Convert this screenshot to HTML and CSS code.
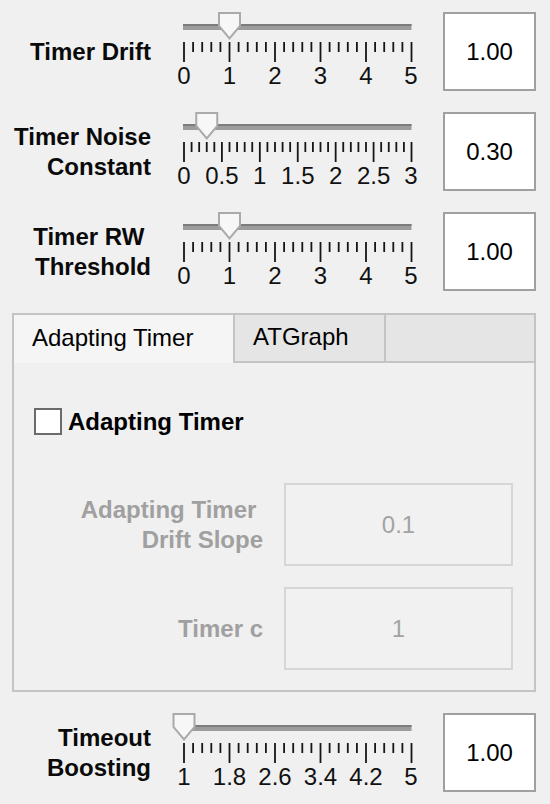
FILE: index.html
```html
<!DOCTYPE html>
<html>
<head>
<meta charset="utf-8">
<link rel="stylesheet" href="styles.css">
</head>
<body>
<div class="app">
  <div class="row">
    <div class="label">Timer Drift</div>
    <svg class="slider" width="250" height="79" viewBox="0 0 250 79">
      <rect class="track" x="11" y="12" width="228.5" height="6"/>
      <rect class="track-top" x="11" y="12" width="228.5" height="2"/>
      <line class="tick" x1="11.1" y1="35" x2="241" y2="35" stroke-width="10" stroke-dasharray="1.8 7.3"/>
      <line class="tick" x1="11.1" y1="45" x2="241" y2="45" stroke-width="10" stroke-dasharray="1.8 43.7"/>
      <polygon class="thumb" points="47,1 68,1 68,14 57.5,26.5 47,14"/>
      <text class="tl" x="12" y="72">0</text>
      <text class="tl" x="57.5" y="72">1</text>
      <text class="tl" x="103" y="72">2</text>
      <text class="tl" x="148.5" y="72">3</text>
      <text class="tl" x="194" y="72">4</text>
      <text class="tl" x="239" y="72">5</text>
    </svg>
    <div class="value">1.00</div>
  </div>

  <div class="row">
    <div class="label">Timer Noise<br>Constant</div>
    <svg class="slider" width="250" height="79" viewBox="0 0 250 79">
      <rect class="track" x="11" y="12" width="228.5" height="6"/>
      <rect class="track-top" x="11" y="12" width="228.5" height="2"/>
      <line class="tick" x1="11.1" y1="35" x2="241" y2="35" stroke-width="10" stroke-dasharray="1.8 5.7833"/>
      <line class="tick" x1="11.1" y1="45" x2="241" y2="45" stroke-width="10" stroke-dasharray="1.8 36.1167"/>
      <polygon class="thumb" points="24.25,1 45.25,1 45.25,14 34.75,26.5 24.25,14"/>
      <text class="tl" x="12" y="72">0</text>
      <text class="tl" x="49.9" y="72">0.5</text>
      <text class="tl" x="87.8" y="72">1</text>
      <text class="tl" x="125.8" y="72">1.5</text>
      <text class="tl" x="163.7" y="72">2</text>
      <text class="tl" x="201.6" y="72">2.5</text>
      <text class="tl" x="239" y="72">3</text>
    </svg>
    <div class="value">0.30</div>
  </div>

  <div class="row">
    <div class="label">Timer RW&nbsp;<br>Threshold</div>
    <svg class="slider" width="250" height="79" viewBox="0 0 250 79">
      <rect class="track" x="11" y="12" width="228.5" height="6"/>
      <rect class="track-top" x="11" y="12" width="228.5" height="2"/>
      <line class="tick" x1="11.1" y1="35" x2="241" y2="35" stroke-width="10" stroke-dasharray="1.8 7.3"/>
      <line class="tick" x1="11.1" y1="45" x2="241" y2="45" stroke-width="10" stroke-dasharray="1.8 43.7"/>
      <polygon class="thumb" points="47,1 68,1 68,14 57.5,26.5 47,14"/>
      <text class="tl" x="12" y="72">0</text>
      <text class="tl" x="57.5" y="72">1</text>
      <text class="tl" x="103" y="72">2</text>
      <text class="tl" x="148.5" y="72">3</text>
      <text class="tl" x="194" y="72">4</text>
      <text class="tl" x="239" y="72">5</text>
    </svg>
    <div class="value">1.00</div>
  </div>

  <div class="panel">
    <div class="tabs">
      <div class="tab active">Adapting Timer</div>
      <div class="tab">ATGraph</div>
      <div class="tab-fill"></div>
    </div>
    <div class="tab-body">
      <div class="check">
        <span class="check-box"></span>
        <span class="check-text">Adapting Timer</span>
      </div>
      <div class="fields">
        <div class="flabel">Adapting Timer&nbsp;<br>Drift Slope</div>
        <div class="field">0.1</div>
        <div class="flabel">Timer c</div>
        <div class="field">1</div>
      </div>
    </div>
  </div>

  <div class="row row-last">
    <div class="label">Timeout<br>Boosting</div>
    <svg class="slider" width="250" height="79" viewBox="0 0 250 79">
      <rect class="track" x="11" y="12" width="228.5" height="6"/>
      <rect class="track-top" x="11" y="12" width="228.5" height="2"/>
      <line class="tick" x1="11.1" y1="35" x2="241" y2="35" stroke-width="10" stroke-dasharray="1.8 7.3"/>
      <line class="tick" x1="11.1" y1="45" x2="241" y2="45" stroke-width="10" stroke-dasharray="1.8 43.7"/>
      <polygon class="thumb" points="1.5,1 22.5,1 22.5,14 12,26.5 1.5,14"/>
      <text class="tl" x="12" y="72">1</text>
      <text class="tl" x="57.5" y="72">1.8</text>
      <text class="tl" x="103" y="72">2.6</text>
      <text class="tl" x="148.5" y="72">3.4</text>
      <text class="tl" x="194" y="72">4.2</text>
      <text class="tl" x="239" y="72">5</text>
    </svg>
    <div class="value">1.00</div>
  </div>
</div>
</body>
</html>
```

FILE: styles.css
```css
html, body {
  margin: 0;
  padding: 0;
  background: #f0f0f0;
}

body {
  font-family: "Liberation Sans", Arial, Helvetica, sans-serif;
  font-size: 24px;
  color: #000;
}

.app {
  width: 550px;
}

.row {
  display: flex;
  align-items: flex-start;
  height: 100px;
  padding-top: 12px;
  box-sizing: border-box;
}

.label {
  width: 151px;
  height: 79px;
  display: flex;
  align-items: center;
  justify-content: flex-end;
  text-align: right;
  font-weight: bold;
  line-height: 30px;
  color: #0a0a0a;
}

.slider {
  display: block;
  margin-left: 21px;
  flex: none;
}

.track { fill: #9c9c9c; }
.track-top { fill: #7c7c7c; }
.tick { stroke: #161616; }
.thumb {
  fill: #f7f7f7;
  stroke: #aaaaaa;
  stroke-width: 2;
}
.tl {
  font-family: "Liberation Sans", Arial, Helvetica, sans-serif;
  font-size: 24px;
  fill: #111;
  text-anchor: middle;
}

.value {
  margin-left: 21px;
  width: 93px;
  height: 79px;
  box-sizing: border-box;
  border: 2px solid #a0a0a0;
  background: #fff;
  display: flex;
  align-items: center;
  justify-content: center;
}

.panel {
  margin: 13px 14px 0 12px;
  height: 379px;
  box-sizing: border-box;
  border: 2px solid #c4c4c4;
  display: flex;
  flex-direction: column;
}

.tabs {
  display: flex;
  height: 48px;
  flex: none;
}

.tab {
  box-sizing: border-box;
  height: 48px;
  padding-left: 18px;
  padding-bottom: 2px;
  display: flex;
  align-items: center;
  background: #e5e5e5;
  border-right: 2px solid #c4c4c4;
  border-bottom: 2px solid #c4c4c4;
}

.tab.active {
  width: 221px;
  background: #f5f5f5;
  border-bottom: none;
}

.tab:nth-child(2) {
  width: 151px;
}

.tab-fill {
  flex: 1;
  height: 48px;
  box-sizing: border-box;
  background: #e5e5e5;
  border-bottom: 2px solid #c4c4c4;
}

.tab-body {
  flex: 1;
  padding-top: 45px;
}

.check {
  display: flex;
  align-items: center;
  margin-left: 20px;
  height: 27px;
}

.check-box {
  width: 28px;
  height: 27px;
  box-sizing: border-box;
  border: 2px solid #6b6b6b;
  background: #fff;
}

.check-text {
  margin-left: 6px;
  font-weight: bold;
}

.fields {
  display: grid;
  grid-template-columns: 249px 229px;
  grid-auto-rows: 83px;
  column-gap: 21px;
  row-gap: 21px;
  margin-top: 48px;
}

.flabel {
  display: flex;
  align-items: center;
  justify-content: flex-end;
  text-align: right;
  font-weight: bold;
  line-height: 30px;
  color: #a0a0a0;
}

.field {
  box-sizing: border-box;
  border: 2px solid #d6d6d6;
  background: #f1f1f1;
  color: #a3a3a3;
  display: flex;
  align-items: center;
  justify-content: center;
}

.row-last {
  margin-top: 9px;
}
```
